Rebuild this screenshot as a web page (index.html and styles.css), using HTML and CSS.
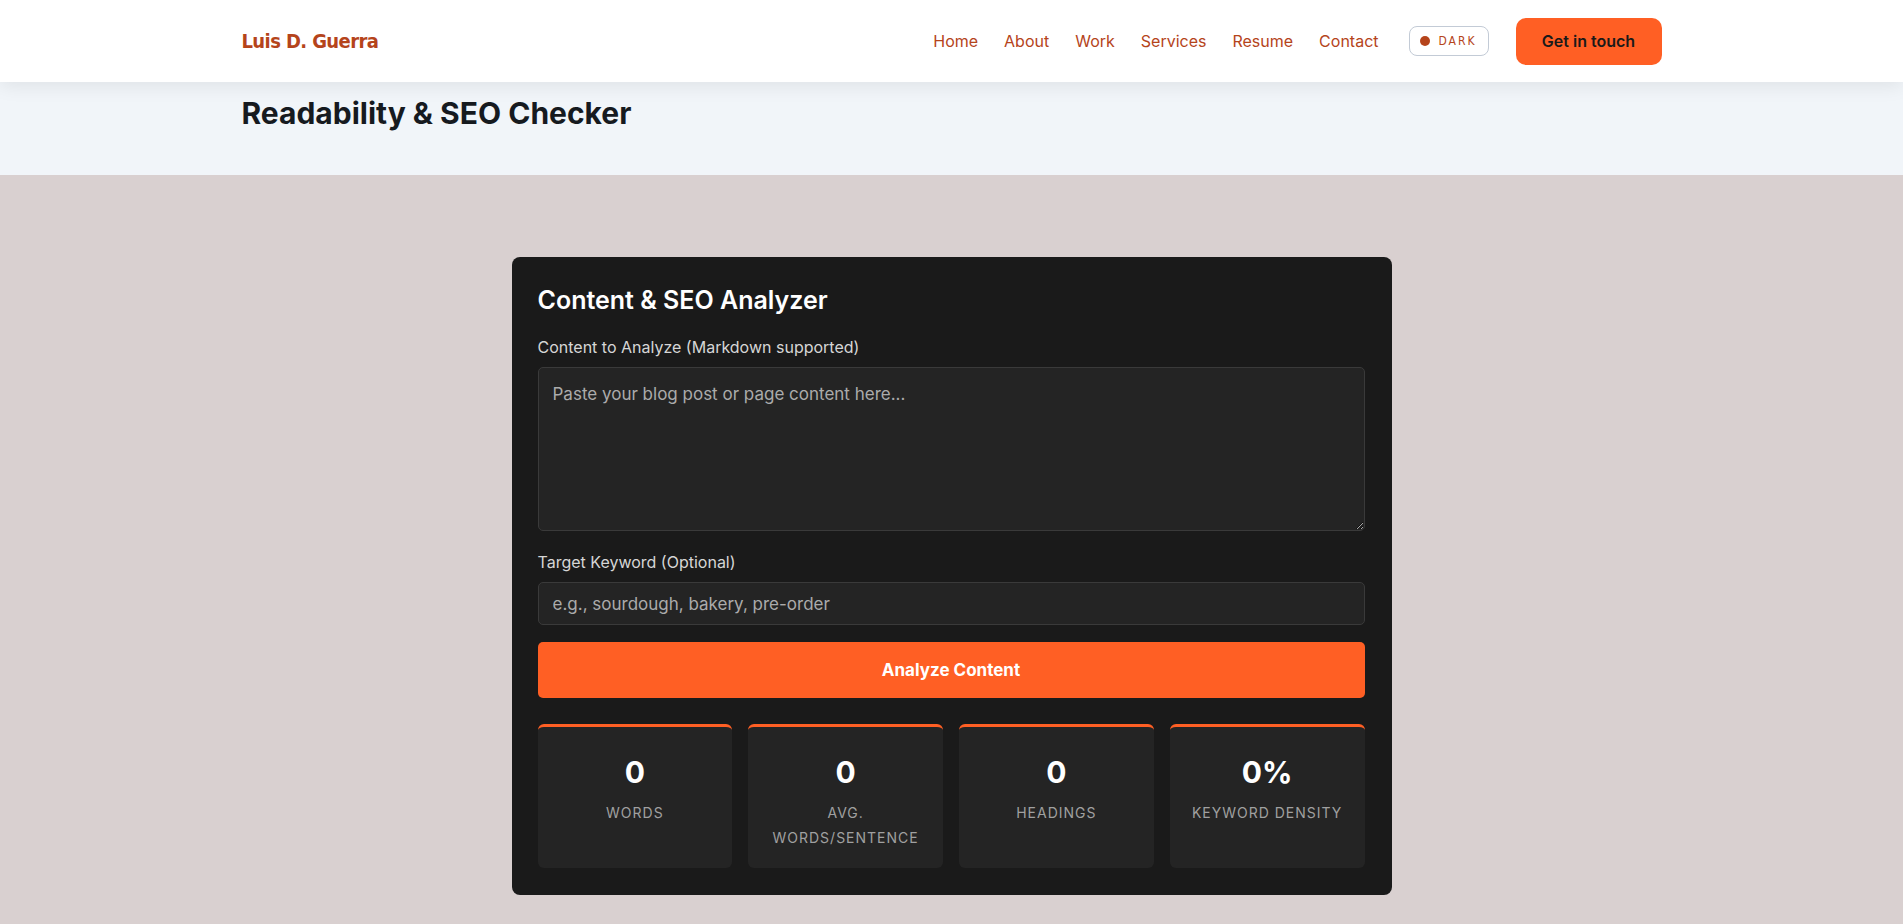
FILE: index.html
```html
<!DOCTYPE html>
<html lang="en">
  <head>
    <meta charset="utf-8">
    <title>Readability &amp; SEO Checker</title>
    <link rel="stylesheet" href="styles.css">
  </head>
  <body>
    <!-- top bar -->
    <header class="site-header">
      <div class="wrap header-row">
        <a class="logo" href="#">Luis D. Guerra</a>
        <div class="header-right">
          <nav class="main-nav">
            <a href="#">Home</a>
            <a href="#">About</a>
            <a href="#">Work</a>
            <a href="#">Services</a>
            <a href="#">Resume</a>
            <a href="#">Contact</a>
          </nav>
          <button class="theme-toggle"><span class="dot"></span>DARK</button>
          <a class="cta-btn" href="#">Get in touch</a>
        </div>
      </div>
    </header>

    <section class="page-hero">
      <div class="wrap">
        <h1 class="page-title">Readability &amp; SEO Checker</h1>
      </div>
    </section>

    <main class="tool-area">
      <div class="tool-card">
        <h2 class="tool-title">Content &amp; SEO Analyzer</h2>

        <label class="field-label" for="content">Content to Analyze (Markdown supported)</label>
        <textarea id="content" class="field field-area" placeholder="Paste your blog post or page content here..."></textarea>

        <label class="field-label label-gap" for="keyword">Target Keyword (Optional)</label>
        <input id="keyword" class="field field-input" type="text" placeholder="e.g., sourdough, bakery, pre-order">

        <button class="analyze-btn">Analyze Content</button>

        <!-- result tiles -->
        <div class="stats">
          <div class="stat">
            <div class="stat-num">0</div>
            <div class="stat-label">Words</div>
          </div>
          <div class="stat">
            <div class="stat-num">0</div>
            <div class="stat-label">Avg. Words/Sentence</div>
          </div>
          <div class="stat">
            <div class="stat-num">0</div>
            <div class="stat-label">Headings</div>
          </div>
          <div class="stat">
            <div class="stat-num">0%</div>
            <div class="stat-label">Keyword Density</div>
          </div>
        </div>
      </div>
    </main>
  </body>
</html>
```

FILE: styles.css
```css
* {
  margin: 0;
  padding: 0;
  box-sizing: border-box;
}

body {
  font-family: Inter, "Noto Sans", sans-serif;
  background-color: #d9d0d0;
  min-height: 100vh;
}

a {
  text-decoration: none;
}

.wrap {
  width: 1420px;
  margin: 0 auto;
}

/* header */
.site-header {
  position: relative;
  z-index: 2;
  height: 82px;
  background-color: #fff;
  box-shadow: 0 4px 18px rgba(0, 0, 0, 0.08);
}

.header-row {
  height: 100%;
  display: flex;
  align-items: center;
  justify-content: space-between;
}

.logo {
  color: #b5441b;
  font-family: "Liberation Sans Narrow", "DejaVu Sans Condensed", Inter, sans-serif;
  font-size: 20px;
  font-weight: 700;
  letter-spacing: -0.6px;
}

.header-right {
  display: flex;
  align-items: center;
}

.main-nav {
  display: flex;
  gap: 26px;
}

.main-nav a {
  color: #b5441b;
  font-size: 16px;
}

.theme-toggle {
  margin-left: 30px;
  width: 80px;
  height: 30px;
  display: flex;
  align-items: center;
  justify-content: center;
  gap: 8px;
  background: #fff;
  border: 1px solid #c3cbd6;
  border-radius: 8px;
  color: #b5441b;
  font-family: "Liberation Sans Narrow", "DejaVu Sans Condensed", Inter, sans-serif;
  font-size: 12px;
  letter-spacing: 2px;
}

.theme-toggle .dot {
  width: 10px;
  height: 10px;
  border-radius: 50%;
  background-color: #b5441b;
}

.cta-btn {
  margin-left: 27px;
  width: 146px;
  height: 47px;
  display: flex;
  align-items: center;
  justify-content: center;
  background-color: #ff5f24;
  border-radius: 10px;
  color: #1a1a1a;
  font-size: 16px;
  font-weight: 600;
}

/* page title band */
.page-hero {
  background-color: #f1f5f9;
  height: 93px;
  padding-top: 13px;
}

.page-title {
  font-size: 30px;
  line-height: 36px;
  font-weight: 700;
  color: #161a1f;
}

/* analyzer card */
.tool-area {
  padding: 82px 0 40px;
}

.tool-card {
  width: 880px;
  margin: 0 auto;
  padding: 27px 27px 27px 26px;
  background-color: #1a1a1a;
  border-radius: 8px;
  display: flex;
  flex-direction: column;
}

.tool-title {
  color: #fff;
  font-size: 25px;
  line-height: 32px;
  font-weight: 600;
  margin-bottom: 21px;
}

.field-label {
  display: block;
  color: #d6d6d6;
  font-size: 16px;
  line-height: 20px;
  margin-bottom: 10px;
}

.label-gap {
  margin-top: 21px;
}

.field {
  width: 100%;
  background-color: #242424;
  border: 1px solid #3a3a3a;
  border-radius: 5px;
  color: #e6e6e6;
  font-family: Inter, "Noto Sans", sans-serif;
  font-size: 17px;
  outline: none;
}

.field::placeholder {
  color: #ababab;
}

.field-area {
  height: 164px;
  padding: 14px 14px;
  line-height: 24px;
  resize: vertical;
}

.field-input {
  height: 43px;
  padding: 0 14px;
}

.analyze-btn {
  margin-top: 17px;
  height: 56px;
  border: none;
  border-radius: 5px;
  background-color: #ff5f24;
  color: #fff;
  font-family: Inter, "Noto Sans", sans-serif;
  font-size: 17px;
  font-weight: 700;
  cursor: pointer;
}

.stats {
  margin-top: 26px;
  display: grid;
  grid-template-columns: repeat(4, 1fr);
  gap: 16px;
}

.stat {
  height: 144px;
  padding-top: 27px;
  background-color: #242424;
  border-top: 3px solid #ff5f24;
  border-radius: 6px;
  text-align: center;
}

.stat-num {
  color: #fff;
  font-size: 30px;
  line-height: 36px;
  font-weight: 700;
}

.stat-label {
  margin-top: 10px;
  padding: 0 20px;
  color: #a0a0a0;
  font-size: 14px;
  line-height: 25px;
  letter-spacing: 1px;
  text-transform: uppercase;
}
```
